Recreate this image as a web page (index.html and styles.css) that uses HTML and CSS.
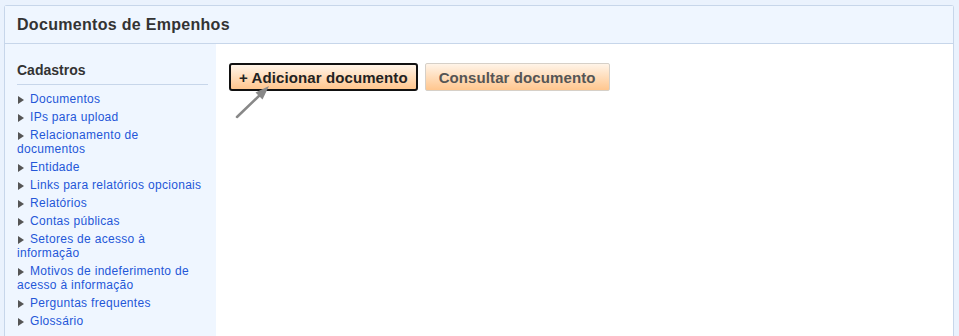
FILE: index.html
```html
<!DOCTYPE html>
<html>
<head>
<meta name="viewport" content="width=device-width, initial-scale=1.0">
<link rel="stylesheet" href="styles.css">
</head>
<body>

<div class="panel">
  <div class="panel-header">Documentos de Empenhos</div>
  <div class="panel-body">
    <div class="sidebar">
      <h3 class="sidebar-title">Cadastros</h3>
      <ul class="menu">
        <li><a href="#">Documentos</a></li>
        <li><a href="#">IPs para upload</a></li>
        <li><a href="#">Relacionamento de documentos</a></li>
        <li><a href="#">Entidade</a></li>
        <li><a href="#">Links para relatórios opcionais</a></li>
        <li><a href="#">Relatórios</a></li>
        <li><a href="#">Contas públicas</a></li>
        <li><a href="#">Setores de acesso à informação</a></li>
        <li><a href="#">Motivos de indeferimento de acesso à informação</a></li>
        <li><a href="#">Perguntas frequentes</a></li>
        <li><a href="#">Glossário</a></li>
      </ul>
    </div>
    <div class="content">
      <div class="actions">
        <button class="button active">+ Adicionar documento</button>
        <button class="button">Consultar documento</button>
      </div>
      <!-- pointer drawn over the first button -->
      <svg class="pointer" width="70" height="90" viewBox="0 0 70 90">
        <line x1="21" y1="73" x2="46" y2="49" stroke="#888" stroke-width="2.5" stroke-linecap="round"/>
        <polygon points="53,42 46.5,55.5 39.5,48.5" fill="#888"/>
      </svg>
    </div>
  </div>
</div>

</body>
</html>
```

FILE: styles.css
```css
* {box-sizing: border-box;}
html, body {height: 100%;}
body {
  margin: 0;
  padding: 5px 5px 0 4px;
  background: #eaf2fd;
  font-family: Arial, "Liberation Sans", sans-serif;
  color: #333;
  overflow: hidden;
}
.panel {
  height: 100%;
  display: flex;
  flex-direction: column;
  border: 1px solid #c7d6ea;
  border-bottom: none;
  border-radius: 3px 3px 0 0;
}
.panel-header {
  height: 38px;
  line-height: 37px;
  padding: 0 12px;
  background: #eff6ff;
  border-bottom: 1px solid #c7d6ea;
  font-size: 16px;
  font-weight: bold;
  letter-spacing: 0.3px;
  color: #333;
}
.panel-body {
  flex: 1;
  display: flex;
}
.sidebar {
  width: 211px;
  padding: 18px 8px 0 12px;
  background: #eff6ff;
}
.sidebar-title {
  margin: 0 0 7px 0;
  padding-bottom: 6px;
  border-bottom: 1px solid #c7d6ea;
  font-size: 14px;
  line-height: 16px;
  color: #333;
}
.menu {
  list-style: none;
  margin: 0;
  padding: 0;
}
.menu li {
  font-size: 12px;
  line-height: 14px;
  letter-spacing: 0.3px;
  margin-bottom: 4px;
}
.menu li::before {
  content: "";
  display: inline-block;
  margin: 0 6px 0 1px;
  border-left: 6px solid #555;
  border-top: 4px solid transparent;
  border-bottom: 4px solid transparent;
  vertical-align: -1px;
}
.menu a {
  color: #2457d8;
  text-decoration: none;
}
.content {
  flex: 1;
  position: relative;
  padding: 19px 13px;
  background: #fff;
}
.actions {
  display: flex;
  gap: 7px;
}
.button {
  height: 28px;
  padding: 0 13px;
  border: 1px solid #d6d0c8;
  border-radius: 2px;
  background: linear-gradient(#fff4e8, #ffc68e);
  font-family: Arial, "Liberation Sans", sans-serif;
  font-size: 15px;
  font-weight: bold;
  letter-spacing: 0.1px;
  color: #555;
  cursor: pointer;
}
.button.active {
  padding: 0 8px;
  border: 2px solid #111;
  border-radius: 3px;
  color: #222;
}
.pointer {
  position: absolute;
  left: 0;
  top: 0;
}
```
